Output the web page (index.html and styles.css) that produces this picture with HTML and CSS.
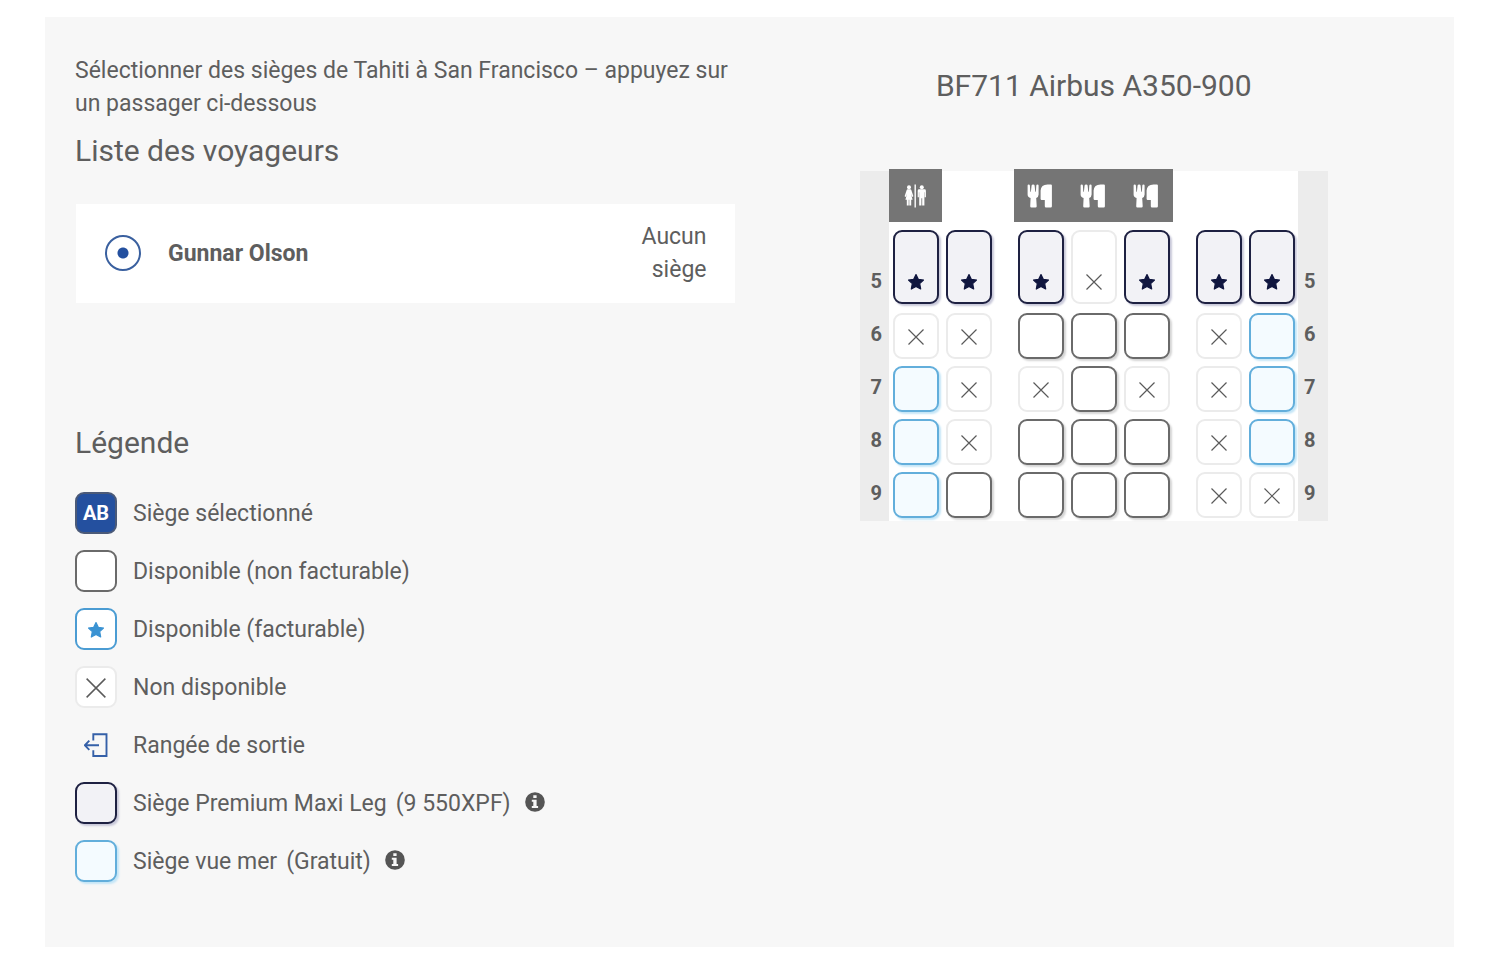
FILE: index.html
```html
<!DOCTYPE html>
<html lang="fr">
<head>
  <meta charset="UTF-8" />
  <meta name="viewport" content="width=device-width, initial-scale=1.0"/>
  <title>Sélection des sièges</title>
  <link rel="stylesheet" href="styles.css">
</head>
<body>

  <!-- ICONS -->
  <svg class="sprite" xmlns="http://www.w3.org/2000/svg">
    <symbol id="icon-star" viewBox="0 0 16 16">
      <path d="M8 0.6 L10.3 5.3 L15.5 6 L11.7 9.6 L12.7 15 L8 12.4 L3.3 15 L4.3 9.6 L0.5 6 L5.7 5.3 Z" fill="currentColor" stroke="currentColor" stroke-width="1.2" stroke-linejoin="round" />
    </symbol>
    <symbol id="icon-cross" viewBox="0 0 16 16">
      <path d="M0.5 0.5 L15.5 15.5 M15.5 0.5 L0.5 15.5" fill="none" stroke="currentColor" stroke-width="1.2" />
    </symbol>
    <symbol id="icon-info" viewBox="0 0 20 20">
      <circle cx="10" cy="10" r="9.8" fill="#555" />
      <path d="M8.3 3.2 H11.6 V6.1 H8.3 Z M6.8 7.8 H11.6 V14 H13.1 V16 H6.8 V14 H8.3 V9.8 H6.8 Z" fill="#f7f7f7" />
    </symbol>
    <symbol id="icon-exit" viewBox="0 0 24 24">
      <path d="M9.3 7.5 V1.3 H22.5 V23 H9.3 V17.3 M15 12.3 H1 M5.3 7.6 L0.9 12.3 L5.3 16.8" fill="none" stroke="#3560a8" stroke-width="1.9" />
    </symbol>
    <symbol id="icon-toilet" viewBox="0 0 22 24">
      <g fill="#fff">
        <rect x="10.5" y="0.5" width="1.4" height="23" />
        <circle cx="5" cy="3.2" r="2" />
        <path d="M3.6 5.3 H6.4 Q7.1 5.3 7.3 6.1 L9.4 12.2 L8.2 12.9 L6.9 9.4 L8.6 15.8 H7.2 V21.5 H5.3 V15.8 H4.7 V21.5 H2.8 V15.8 H1.4 L3.1 9.4 L1.8 12.9 L0.6 12.2 L2.7 6.1 Q2.9 5.3 3.6 5.3 Z" />
        <circle cx="17.8" cy="3.2" r="2" />
        <path d="M15.1 5.3 H20.5 Q21.9 5.3 21.9 6.7 V13.3 H20.7 V8.2 H20.4 V21.5 H18.2 V14.2 H17.4 V21.5 H15.2 V8.2 H14.9 V13.3 H13.7 V6.7 Q13.7 5.3 15.1 5.3 Z" />
      </g>
    </symbol>
    <symbol id="icon-galley" viewBox="0 0 26 24">
      <g fill="#fff">
        <path d="M0.6 1.5 Q0.6 0.5 1.7 0.5 Q2.8 0.5 2.9 1.5 L3.3 7.8 H3.9 L4.6 1.5 Q4.7 0.5 6.1 0.5 Q7.5 0.5 7.6 1.5 L8.3 7.8 H8.9 L9.3 1.5 Q9.4 0.5 10.5 0.5 Q11.6 0.5 11.6 1.5 V10.5 Q11.6 13 9.2 14 L9.7 22.3 Q9.7 23.5 8.5 23.5 H4.4 Q3.2 23.5 3.2 22.3 L3.6 14 Q0.6 13 0.6 10.5 Z" />
        <path d="M13.6 15.1 V6.5 Q14 0.5 20.5 0.5 H23.9 Q24.9 0.5 24.9 1.5 V22.3 Q24.9 23.5 23.7 23.5 H19 Q17.8 23.5 17.8 22.3 V15.9 H14.4 Q13.6 15.9 13.6 15.1 Z" />
      </g>
    </symbol>
  </svg>

  <main class="seat-panel">

    <!-- PASSENGERS + LEGEND -->
    <section class="left-column">
      <p class="intro">Sélectionner des sièges de Tahiti à San Francisco – appuyez sur un passager ci-dessous</p>
      <h2 class="title">Liste des voyageurs</h2>

      <label class="passenger" for="passenger-1">
        <input class="passenger-radio" type="radio" id="passenger-1" name="passenger" checked>
        <span class="passenger-name">Gunnar Olson</span>
        <span class="passenger-seat">Aucun siège</span>
      </label>

      <h2 class="title legend-title">Légende</h2>
      <ul class="legend">
        <li><span class="swatch selected">AB</span><span>Siège sélectionné</span></li>
        <li><span class="swatch free"></span><span>Disponible (non facturable)</span></li>
        <li><span class="swatch paid"><svg class="icon"><use href="#icon-star"/></svg></span><span>Disponible (facturable)</span></li>
        <li><span class="swatch taken"><svg class="icon cross"><use href="#icon-cross"/></svg></span><span>Non disponible</span></li>
        <li><span class="swatch exit"><svg class="exit-icon"><use href="#icon-exit"/></svg></span><span>Rangée de sortie</span></li>
        <li>
          <span class="swatch premium"></span>
          <span class="legend-text"><span>Siège Premium Maxi Leg</span><span>(9 550XPF)</span></span>
          <button class="info" type="button" aria-label="Informations"><svg><use href="#icon-info"/></svg></button>
        </li>
        <li>
          <span class="swatch sea"></span>
          <span class="legend-text"><span>Siège vue mer</span><span>(Gratuit)</span></span>
          <button class="info" type="button" aria-label="Informations"><svg><use href="#icon-info"/></svg></button>
        </li>
      </ul>
    </section>

    <!-- SEAT MAP -->
    <section class="right-column">
      <h1 class="title plane-title">BF711 Airbus A350-900</h1>

      <table class="seat-map">
        <tr class="facilities">
          <td class="edge"></td>
          <td><div class="facility"><svg class="toilet"><use href="#icon-toilet"/></svg></div></td>
          <td></td>
          <td class="aisle"></td>
          <td><div class="facility"><svg class="galley"><use href="#icon-galley"/></svg></div></td>
          <td><div class="facility"><svg class="galley"><use href="#icon-galley"/></svg></div></td>
          <td><div class="facility"><svg class="galley"><use href="#icon-galley"/></svg></div></td>
          <td class="aisle"></td>
          <td></td>
          <td></td>
          <td class="edge"></td>
        </tr>
        <tr class="long">
          <th class="edge">5</th>
          <td><button class="seat premium"><svg class="icon"><use href="#icon-star"/></svg></button></td>
          <td><button class="seat premium"><svg class="icon"><use href="#icon-star"/></svg></button></td>
          <td class="aisle"></td>
          <td><button class="seat premium"><svg class="icon"><use href="#icon-star"/></svg></button></td>
          <td><button class="seat taken" disabled><svg class="icon"><use href="#icon-cross"/></svg></button></td>
          <td><button class="seat premium"><svg class="icon"><use href="#icon-star"/></svg></button></td>
          <td class="aisle"></td>
          <td><button class="seat premium"><svg class="icon"><use href="#icon-star"/></svg></button></td>
          <td><button class="seat premium"><svg class="icon"><use href="#icon-star"/></svg></button></td>
          <th class="edge">5</th>
        </tr>
        <tr>
          <th class="edge">6</th>
          <td><button class="seat taken" disabled><svg class="icon"><use href="#icon-cross"/></svg></button></td>
          <td><button class="seat taken" disabled><svg class="icon"><use href="#icon-cross"/></svg></button></td>
          <td class="aisle"></td>
          <td><button class="seat free"></button></td>
          <td><button class="seat free"></button></td>
          <td><button class="seat free"></button></td>
          <td class="aisle"></td>
          <td><button class="seat taken" disabled><svg class="icon"><use href="#icon-cross"/></svg></button></td>
          <td><button class="seat sea"></button></td>
          <th class="edge">6</th>
        </tr>
        <tr>
          <th class="edge">7</th>
          <td><button class="seat sea"></button></td>
          <td><button class="seat taken" disabled><svg class="icon"><use href="#icon-cross"/></svg></button></td>
          <td class="aisle"></td>
          <td><button class="seat taken" disabled><svg class="icon"><use href="#icon-cross"/></svg></button></td>
          <td><button class="seat free"></button></td>
          <td><button class="seat taken" disabled><svg class="icon"><use href="#icon-cross"/></svg></button></td>
          <td class="aisle"></td>
          <td><button class="seat taken" disabled><svg class="icon"><use href="#icon-cross"/></svg></button></td>
          <td><button class="seat sea"></button></td>
          <th class="edge">7</th>
        </tr>
        <tr>
          <th class="edge">8</th>
          <td><button class="seat sea"></button></td>
          <td><button class="seat taken" disabled><svg class="icon"><use href="#icon-cross"/></svg></button></td>
          <td class="aisle"></td>
          <td><button class="seat free"></button></td>
          <td><button class="seat free"></button></td>
          <td><button class="seat free"></button></td>
          <td class="aisle"></td>
          <td><button class="seat taken" disabled><svg class="icon"><use href="#icon-cross"/></svg></button></td>
          <td><button class="seat sea"></button></td>
          <th class="edge">8</th>
        </tr>
        <tr>
          <th class="edge">9</th>
          <td><button class="seat sea"></button></td>
          <td><button class="seat free"></button></td>
          <td class="aisle"></td>
          <td><button class="seat free"></button></td>
          <td><button class="seat free"></button></td>
          <td><button class="seat free"></button></td>
          <td class="aisle"></td>
          <td><button class="seat taken" disabled><svg class="icon"><use href="#icon-cross"/></svg></button></td>
          <td><button class="seat taken" disabled><svg class="icon"><use href="#icon-cross"/></svg></button></td>
          <th class="edge">9</th>
        </tr>
      </table>
    </section>

  </main>

</body>
</html>
```

FILE: styles.css
```css
* {
  margin: 0;
  padding: 0;
  box-sizing: border-box;
}

body {
  font-family: Roboto, Arial, sans-serif;
  font-size: 23px;
  line-height: 33px;
  color: #5e5e5e;
  background: #fff;
  padding: 17px 46px 27px 45px;
}

.sprite {
  display: none;
}

.seat-panel {
  display: grid;
  grid-template-columns: 1fr 1fr;
  gap: 28px;
  padding: 37px 30px 65px;
  background: #f7f7f7;
}

.title {
  font-size: 30px;
  font-weight: 400;
  line-height: 34px;
}

/* Passengers */
.intro {
  margin-bottom: 14px;
}

.passenger {
  display: flex;
  align-items: center;
  margin: 36px 1px 0;
  padding: 16px 28px 17px 29px;
  background: #fff;
  cursor: pointer;
}

.passenger-radio {
  appearance: none;
  flex: none;
  width: 36px;
  height: 36px;
  margin-right: 27px;
  border: 2px solid #3a609f;
  border-radius: 50%;
  background: radial-gradient(circle, #24509f 5px, #fff 6px);
}

.passenger-name {
  flex: 1;
  font-weight: 700;
}

.passenger-seat {
  width: 72px;
  text-align: right;
}

/* Legend */
.legend-title {
  margin-top: 123px;
}

.legend {
  display: flex;
  flex-direction: column;
  gap: 16px;
  margin-top: 32px;
  list-style: none;
}

.legend li {
  display: flex;
  align-items: center;
  gap: 16px;
}

.legend-text {
  display: flex;
  gap: 9px;
}

.swatch {
  display: flex;
  align-items: center;
  justify-content: center;
  width: 42px;
  height: 42px;
  border: 2px solid transparent;
  border-radius: 9px;
}

.swatch.paid,
.swatch.taken {
  padding-top: 2px;
}

.info {
  width: 20px;
  height: 20px;
  margin: 0 0 2px -2px;
  border: 0;
  background: none;
}

.info svg {
  display: block;
  width: 20px;
  height: 20px;
}

.icon {
  display: block;
  width: 16px;
  height: 16px;
}

.icon.cross {
  width: 20px;
  height: 20px;
}

.exit-icon {
  width: 24px;
  height: 24px;
}

/* Seat states */
.selected {
  background: #24509f;
  border-color: #4b5a78;
  color: #fff;
  font-size: 20px;
  font-weight: 700;
}

.free {
  background: #fff;
  border-color: #6a6a6a;
}

.paid {
  background: #fff;
  border-color: #4b9cd3;
  color: #3b93d3;
}

.taken {
  background: #fff;
  border-color: #ebebeb;
  color: #5a5a5a;
}

.premium {
  background: #f2f2f6;
  border-color: #1e2142;
  color: #10163f;
  box-shadow: 2px 2px 2px #c9c9da;
}

.sea {
  background: #f4fbff;
  border-color: #62aedb;
  box-shadow: 2px 2px 2px #c5e6f7;
}

/* Seat map */
.right-column {
  display: flex;
  flex-direction: column;
  align-items: center;
}

.plane-title {
  margin-top: 15px;
}

.seat-map {
  margin-top: 68px;
  border-collapse: collapse;
  background: #fff;
}

.seat-map td {
  width: 53px;
  height: 53px;
  vertical-align: top;
}

.seat-map .edge {
  width: 29px;
  padding: 0 0 3px 4px;
  background: #ececec;
  font-size: 20px;
  font-weight: 700;
  line-height: 50px;
  vertical-align: bottom;
}

.seat-map .edge:last-child {
  width: 30px;
  padding: 0 6px 3px 0;
}

.seat-map .aisle {
  width: 19px;
}

.seat-map .facilities td {
  height: 55px;
}

.facility {
  display: flex;
  align-items: center;
  justify-content: center;
  height: 53px;
  margin-top: -2px;
  padding-right: 1px;
  background: #757575;
}

.toilet {
  width: 22px;
  height: 24px;
}

.galley {
  width: 26px;
  height: 24px;
}

.seat {
  display: flex;
  align-items: flex-end;
  justify-content: center;
  width: 46px;
  height: 46px;
  margin: 4px 3px 3px 4px;
  padding-bottom: 12px;
  border: 2px solid;
  border-radius: 9px;
  cursor: pointer;
}

.seat.free {
  border-color: #6a6a6a;
  box-shadow: 2px 2px 2px #d5d5d5;
}

.seat.taken {
  border-color: #ebebeb;
  cursor: default;
}

.seat.premium {
  border-color: #1e2142;
}

.seat.sea {
  border-color: #62aedb;
}

.long .seat {
  height: 74px;
  margin-bottom: 5px;
}
```
